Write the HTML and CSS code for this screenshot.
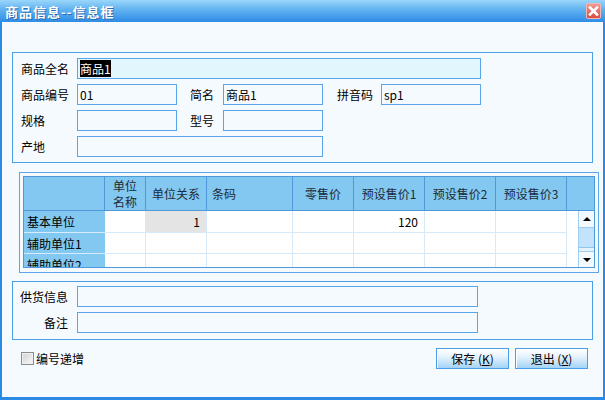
FILE: index.html
```html
<!DOCTYPE html>
<html lang="zh-CN">
<head>
    <meta charset="UTF-8">
    <title>商品信息--信息框</title>
    <link rel="stylesheet" href="styles.css">
</head>
<body>
    <div class="window">
        <div class="titlebar">
            <span class="title">商品信息--信息框</span>
            <span class="close-btn">
                <svg width="13" height="14" viewBox="0 0 13 14">
                    <path d="M3 3.5 L10 10.5 M10 3.5 L3 10.5" stroke="#fff" stroke-width="2.6" stroke-linecap="square"/>
                </svg>
            </span>
        </div>

        <div class="client">
            <!-- basic info -->
            <div class="group basic">
                <div class="form-grid">
                    <span class="lbl">商品全名</span>
                    <div class="field cyan span5"><span class="sel">商品1</span></div>

                    <span class="lbl">商品编号</span>
                    <div class="field">01</div>
                    <span class="lbl l2">简名</span>
                    <div class="field">商品1</div>
                    <span class="lbl l3">拼音码</span>
                    <div class="field">sp1</div>

                    <span class="lbl">规格</span>
                    <div class="field"></div>
                    <span class="lbl l2">型号</span>
                    <div class="field"></div>
                    <span class="lbl"></span>
                    <span></span>

                    <span class="lbl">产地</span>
                    <div class="field span3"></div>
                </div>
            </div>

            <!-- unit grid -->
            <div class="grid-frame">
                <div class="grid">
                    <div class="hd"></div>
                    <div class="hd center two">单位<br>名称</div>
                    <div class="hd center">单位关系</div>
                    <div class="hd left">条码</div>
                    <div class="hd center">零售价</div>
                    <div class="hd center">预设售价1</div>
                    <div class="hd center">预设售价2</div>
                    <div class="hd center">预设售价3</div>
                    <div class="hd last"></div>

                    <div class="rh">基本单位</div>
                    <div class="cell"></div>
                    <div class="cell num gray">1</div>
                    <div class="cell"></div>
                    <div class="cell"></div>
                    <div class="cell num">120</div>
                    <div class="cell"></div>
                    <div class="cell"></div>
                    <div class="blank"></div>

                    <div class="rh">辅助单位1</div>
                    <div class="cell"></div>
                    <div class="cell"></div>
                    <div class="cell"></div>
                    <div class="cell"></div>
                    <div class="cell"></div>
                    <div class="cell"></div>
                    <div class="cell"></div>
                    <div class="blank"></div>

                    <div class="rh">辅助单位2</div>
                    <div class="cell"></div>
                    <div class="cell"></div>
                    <div class="cell"></div>
                    <div class="cell"></div>
                    <div class="cell"></div>
                    <div class="cell"></div>
                    <div class="cell"></div>
                    <div class="blank"></div>

                    <div class="vscroll">
                        <div class="sb-btn"><i class="arrow up"></i></div>
                        <div class="sb-thumb"></div>
                        <div class="sb-track"></div>
                        <div class="sb-btn"><i class="arrow down"></i></div>
                    </div>
                </div>
            </div>

            <!-- supplier / remark -->
            <div class="group extra">
                <div class="extra-grid">
                    <span class="lbl right">供货信息</span>
                    <div class="field"></div>
                    <span class="lbl right">备注</span>
                    <div class="field"></div>
                </div>
            </div>

            <div class="footer">
                <label class="check"><span class="box"></span>编号递增</label>
                <div class="buttons">
                    <button class="btn">保存 (<u>K</u>)</button>
                    <button class="btn">退出 (<u>X</u>)</button>
                </div>
            </div>
        </div>
    </div>
</body>
</html>
```

FILE: styles.css
```css
* {
    margin: 0;
    padding: 0;
    box-sizing: border-box;
}

body {
    width: 605px;
    height: 400px;
    font: 12px "Noto Sans CJK SC", "Liberation Sans", sans-serif;
    color: #000;
}

.window {
    width: 605px;
    height: 400px;
    display: flex;
    flex-direction: column;
    background: #f5faff;
}

/* title bar */
.titlebar {
    height: 22px;
    flex: none;
    display: flex;
    align-items: center;
    justify-content: space-between;
    padding: 0 4px 0 5px;
    background: linear-gradient(#9ad6fa, #5fb1f0 45%, #2f8ce6);
}

.title {
    color: #fff;
    font-weight: bold;
    font-size: 13px;
    letter-spacing: 1px;
    text-shadow: 1px 1px 0 #2a6cb0;
}

.close-btn {
    width: 15px;
    height: 16px;
    display: flex;
    align-items: center;
    justify-content: center;
    border: 1px solid #f4b8b4;
    border-radius: 2px;
    background: linear-gradient(#f29a94, #dc4a42);
}

/* client area */
.client {
    flex: 1;
    border: 2px solid #2b8ae6;
    border-top: 0;
    border-bottom-width: 3px;
    padding: 30px 10px 0 10px;
}

.group {
    border: 1px solid #4c9ee6;
}

.basic {
    padding: 5px 0 5px 8px;
}

.form-grid {
    display: grid;
    grid-template-columns: 56px 100px 46px 100px 58px 100px;
    grid-auto-rows: 21px;
    row-gap: 5px;
    align-items: center;
}

.lbl {
    line-height: 21px;
    white-space: nowrap;
}

.l2 {
    padding-left: 13px;
}

.l3 {
    padding-left: 14px;
}

.right {
    text-align: right;
    padding-right: 9px;
}

.field {
    height: 21px;
    border: 1px solid #58a5ea;
    background: #f5faff;
    padding: 0 2px;
    line-height: 19px;
    white-space: nowrap;
    overflow: hidden;
}

.cyan {
    background: #e1f6fd;
}

.sel {
    background: #000;
    color: #fff;
}

.span5 {
    grid-column: span 5;
}

.span3 {
    grid-column: span 3;
}

/* unit grid */
.grid-frame {
    width: 580px;
    margin: 9px 0 0 7px;
    border: 1px solid #5ba6ea;
    padding: 3px 3px 4px 3px;
}

.grid {
    position: relative;
    height: 92px;
    border: 1px solid #4f98da;
    overflow: hidden;
    background: #fff;
    display: grid;
    grid-template-columns: 81px 41px 61px 86px 61px 71px 71px 71px 27px;
    grid-template-rows: 34px 22px 21px 21px;
}

.hd {
    background: #82c8f0;
    border-right: 1px solid #4f98da;
    border-bottom: 1px solid #4f98da;
    display: flex;
    align-items: center;
    color: #1e2a36;
    white-space: nowrap;
}

.hd.center {
    justify-content: center;
    text-align: center;
}

.hd.left {
    padding-left: 5px;
}

.hd.two {
    line-height: 16px;
}

.hd.last {
    border-right: 0;
}

.rh {
    background: #82c8f0;
    border-bottom: 1px solid #d4ecfb;
    padding-left: 3px;
    display: flex;
    align-items: center;
    white-space: nowrap;
}

.cell {
    border-right: 1px solid #d6e9f8;
    border-bottom: 1px solid #d6e9f8;
    display: flex;
    align-items: center;
}

.num {
    justify-content: flex-end;
    padding-right: 6px;
}

.gray {
    background: #e4e4e4;
}

.vscroll {
    position: absolute;
    right: 0;
    top: 34px;
    bottom: 0;
    width: 16px;
    display: flex;
    flex-direction: column;
    background: #e4f2fd;
    border-left: 1px solid #9fcdf1;
}

.sb-btn {
    height: 17px;
    flex: none;
    display: flex;
    align-items: center;
    justify-content: center;
    background: #f2f9ff;
    border-bottom: 1px solid #9fcdf1;
}

.sb-btn:last-child {
    height: 16px;
    border-bottom: 0;
    border-top: 1px solid #9fcdf1;
}

.sb-thumb {
    height: 20px;
    flex: none;
    background: #c2e3fb;
    border-bottom: 1px solid #8fc6ee;
}

.sb-track {
    flex: 1;
}

.arrow {
    width: 0;
    height: 0;
    border-left: 4px solid transparent;
    border-right: 4px solid transparent;
}

.arrow.up {
    border-bottom: 4px solid #000;
}

.arrow.down {
    border-top: 4px solid #000;
}

/* supplier / remark */
.extra {
    margin-top: 8px;
    padding: 4px 0 6px 0;
}

.extra-grid {
    display: grid;
    grid-template-columns: 64px 401px;
    grid-auto-rows: 21px;
    row-gap: 5px;
}

/* footer */
.footer {
    margin-top: 8px;
    height: 21px;
    display: flex;
    align-items: center;
    justify-content: space-between;
    padding: 0 5px 0 9px;
}

.check {
    display: flex;
    align-items: center;
    gap: 2px;
}

.box {
    width: 13px;
    height: 13px;
    border: 1px solid #8c8c8c;
    background: linear-gradient(135deg, #d2d2d2, #f8f8f8);
    box-shadow: inset 0 0 0 1px #f0f0f0;
}

.buttons {
    display: flex;
    gap: 6px;
}

.btn {
    width: 73px;
    height: 21px;
    font: inherit;
    border: 1px solid #4a9de6;
    background: linear-gradient(#ffffff, #e6f3fd 40%, #a4d3f5);
    box-shadow: inset 1px 1px 0 #fff;
    color: #000;
}

.btn u {
    text-decoration: underline;
}
```
